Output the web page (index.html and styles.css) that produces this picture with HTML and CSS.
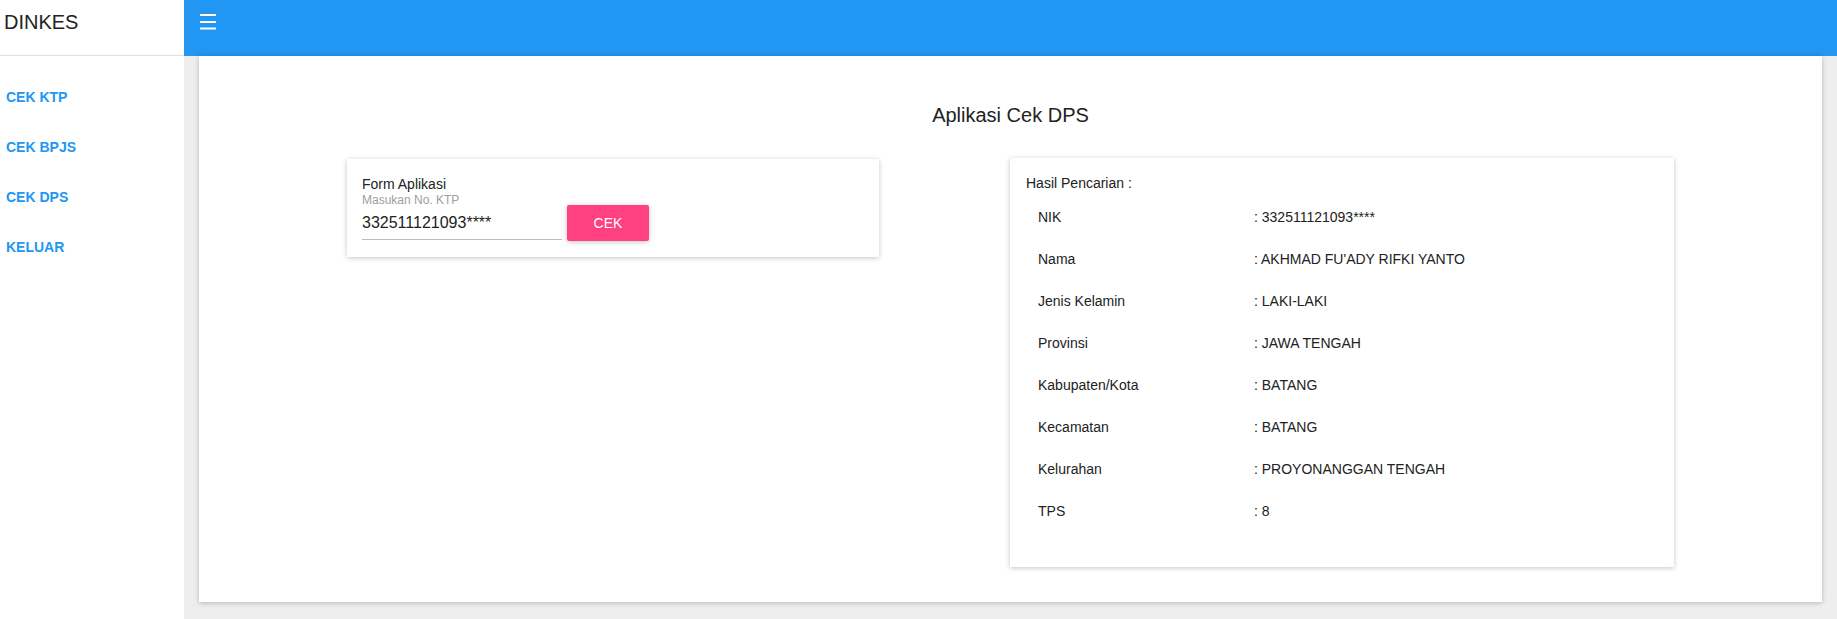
FILE: index.html
```html
<!DOCTYPE html>
<html lang="id">
<head>
<meta charset="utf-8">
<title>Aplikasi Cek DPS</title>
<link rel="stylesheet" href="styles.css">
</head>
<body>
<div class="app">
  <aside class="sidebar">
    <div class="brand">DINKES</div>
    <nav class="menu">
      <a class="menu-item" href="#">CEK KTP</a>
      <a class="menu-item" href="#">CEK BPJS</a>
      <a class="menu-item" href="#">CEK DPS</a>
      <a class="menu-item" href="#">KELUAR</a>
    </nav>
  </aside>
  <div class="main">
    <header class="topbar">
      <svg class="burger" width="16" height="16" viewBox="0 0 16 16" aria-hidden="true">
        <rect x="0" y="0" width="16" height="2" fill="#fff"/>
        <rect x="0" y="7" width="16" height="2" fill="#fff"/>
        <rect x="0" y="13.5" width="16" height="2" fill="#fff"/>
      </svg>
    </header>
    <section class="paper">
      <h1 class="title">Aplikasi Cek DPS</h1>
      <div class="cols">
        <div class="card form-card">
          <div class="form-title">Form Aplikasi</div>
          <div class="form-row">
            <div class="field">
              <div class="field-label">Masukan No. KTP</div>
              <div class="field-input">332511121093****</div>
            </div>
            <button class="btn" type="button">CEK</button>
          </div>
        </div>
        <div class="card result-card">
          <div class="result-title">Hasil Pencarian :</div>
          <div class="result-grid">
            <div class="rl">NIK</div><div class="rv">: 332511121093****</div>
            <div class="rl">Nama</div><div class="rv">: AKHMAD FU'ADY RIFKI YANTO</div>
            <div class="rl">Jenis Kelamin</div><div class="rv">: LAKI-LAKI</div>
            <div class="rl">Provinsi</div><div class="rv">: JAWA TENGAH</div>
            <div class="rl">Kabupaten/Kota</div><div class="rv">: BATANG</div>
            <div class="rl">Kecamatan</div><div class="rv">: BATANG</div>
            <div class="rl">Kelurahan</div><div class="rv">: PROYONANGGAN TENGAH</div>
            <div class="rl">TPS</div><div class="rv">: 8</div>
          </div>
        </div>
      </div>
    </section>
  </div>
</div>
</body>
</html>
```
FILE: styles.css
```css
html, body {
  margin: 0;
  padding: 0;
}
body {
  background: #eeeeee;
  font-family: "Liberation Sans", Arial, sans-serif;
  color: rgba(0, 0, 0, 0.87);
}
.app {
  display: flex;
  min-height: 619px;
}
.sidebar {
  width: 184px;
  flex: 0 0 184px;
  background: #fff;
  min-height: 619px;
}
.brand {
  height: 56px;
  box-sizing: border-box;
  padding: 10px 0 0 4px;
  font-size: 20px;
  line-height: 24px;
  color: #222;
  border-bottom: 1px solid #e0e0e0;
}
.menu {
  display: flex;
  flex-direction: column;
  padding-top: 16px;
}
.menu-item {
  display: block;
  height: 50px;
  line-height: 50px;
  padding-left: 6px;
  font-size: 14px;
  font-weight: bold;
  color: #2196f3;
  text-decoration: none;
}
.main {
  flex: 1;
  display: flex;
  flex-direction: column;
}
.topbar {
  height: 56px;
  background: #2196f3;
  display: flex;
  align-items: flex-start;
  padding: 14px 0 0 16px;
  box-sizing: border-box;
}
.burger {
  display: block;
}
.paper {
  background: #fff;
  margin: 0 15px 17px 15px;
  height: 546px;
  box-sizing: border-box;
  box-shadow: 0 1px 6px rgba(0, 0, 0, 0.12), 0 1px 4px rgba(0, 0, 0, 0.12);
  padding-top: 47px;
}
.title {
  margin: 0;
  text-align: center;
  font-size: 20px;
  font-weight: normal;
  line-height: 24px;
  color: #222;
}
.cols {
  display: flex;
  align-items: flex-start;
  gap: 131px;
  padding: 0 148px;
  margin-top: 31px;
}
.card {
  background: #fff;
  box-sizing: border-box;
  box-shadow: 0 1px 6px rgba(0, 0, 0, 0.12), 0 1px 4px rgba(0, 0, 0, 0.12);
}
.form-card {
  width: 532px;
  flex: 0 0 532px;
  height: 98px;
  padding: 16px 15px 0 15px;
  margin-top: 1px;
}
.form-title {
  font-size: 14px;
  line-height: 18px;
  color: #222;
}
.form-row {
  display: flex;
  align-items: flex-end;
  gap: 5px;
}
.field {
  width: 200px;
}
.field-label {
  font-size: 12px;
  line-height: 14px;
  color: #9e9e9e;
}
.field-input {
  height: 33px;
  box-sizing: border-box;
  line-height: 32px;
  font-size: 16px;
  color: #222;
  border-bottom: 1px solid #bdbdbd;
}
.btn {
  width: 82px;
  height: 36px;
  margin-bottom: -1px;
  border: none;
  border-radius: 2px;
  background: #ff4081;
  color: #fff;
  font-family: "Liberation Sans", Arial, sans-serif;
  font-size: 14px;
  padding: 0;
  box-shadow: 0 1px 6px rgba(0, 0, 0, 0.12), 0 1px 4px rgba(0, 0, 0, 0.12);
}
.result-card {
  width: 664px;
  flex: 0 0 664px;
  height: 409px;
  padding: 16px 17px 0 16px;
}
.result-title {
  font-size: 14px;
  line-height: 18px;
  color: #222;
}
.result-grid {
  display: grid;
  grid-template-columns: 216px 1fr;
  grid-auto-rows: 42px;
  align-items: center;
  margin: 4px 0 0 12px;
  font-size: 14px;
  color: #222;
}
```
